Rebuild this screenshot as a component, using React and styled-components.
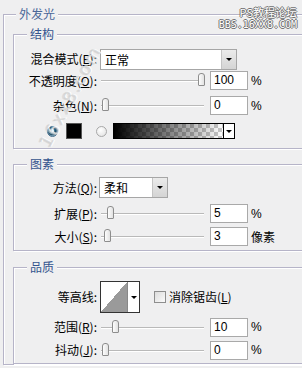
import React from 'react';
import styled, { createGlobalStyle } from 'styled-components';

const Global = createGlobalStyle`
  html, body { margin: 0; padding: 0; }
  body { background: #efeff0; }
`;

const BG = '#efeff0';

const Panel = styled.div`
  position: relative;
  width: 302px;
  height: 368px;
  overflow: hidden;
  box-sizing: border-box;
  padding: 7px 0 0 3px;
  background: ${BG};
  font-family: "Noto Sans CJK SC", "Noto Sans", sans-serif;
  font-size: 12px;
  color: #000;
`;

const Group = styled.fieldset`
  margin: ${(p) => (p.$outer ? '0' : `${p.$mt}px 0 0 9px`)};
  padding: 0;
  width: 340px;
  min-width: 0;
  box-sizing: border-box;
  border: 1px solid #b6b4c8;
  box-shadow: inset 1px 1px 0 #fff, 1px 1px 0 #fff;
`;

const Legend = styled.legend`
  margin-left: ${(p) => p.$ml}px;
  padding: 0 3px;
  height: 14px;
  line-height: 14px;
  font-size: 12px;
  color: ${(p) => p.$color || '#34548e'};
  background: ${BG};
`;

const Body = styled.div`
  display: flex;
  flex-direction: column;
  padding-bottom: ${(p) => p.$pb || 0}px;
`;

const Row = styled.div`
  display: flex;
  align-items: center;
  height: ${(p) => p.$h}px;
  margin-top: ${(p) => p.$mt || 0}px;
`;

const Label = styled.label`
  flex: none;
  width: 86px;
  padding-right: 3px;
  box-sizing: border-box;
  text-align: right;
  white-space: nowrap;
  line-height: 14px;
  u { text-decoration: underline; text-underline-offset: 1px; }
`;

const Select = styled.div`
  flex: none;
  display: flex;
  align-items: stretch;
  width: ${(p) => p.$w}px;
  height: 21px;
  margin-left: ${(p) => p.$ml || 0}px;
  box-sizing: border-box;
  border: 1px solid #a6a6a6;
  background: #fff;
`;

const SelectText = styled.span`
  flex: 1;
  padding-left: 4px;
  line-height: 19px;
`;

const DropBtn = styled.span`
  flex: none;
  width: 14px;
  display: flex;
  align-items: center;
  justify-content: center;
  background: linear-gradient(#ebebeb, #d4d4d4);
  border-left: 1px solid #c4c4c4;
`;

const Tri = styled.span`
  width: 0;
  height: 0;
  border-left: 3px solid transparent;
  border-right: 3px solid transparent;
  border-top: 3px solid #000;
`;

const SliderBox = styled.div`
  position: relative;
  flex: none;
  width: 105px;
  height: 17px;
  &::before {
    content: '';
    position: absolute;
    left: 1px;
    right: 1px;
    top: 8px;
    height: 1px;
    background: #b9b9b9;
    box-shadow: 0 1px 0 #fff;
  }
`;

const Thumb = styled.span`
  position: absolute;
  top: 1px;
  width: 7px;
  height: 13px;
  box-sizing: border-box;
  border: 1px solid #8d8d8d;
  border-radius: 3px 3px 1px 1px;
  background: linear-gradient(90deg, #fdfdfd, #e2e2e2);
`;

const Slider = ({ v }) => (
  <SliderBox>
    <Thumb style={{ left: `${2 + (v / 100) * 96}px` }} />
  </SliderBox>
);

const NumBox = styled.div`
  flex: none;
  width: 38px;
  height: 19px;
  margin-left: 5px;
  box-sizing: border-box;
  border: 1px solid #a9a9a9;
  background: #fff;
  padding-left: 3px;
  font-family: "Liberation Sans", Arial, sans-serif;
  font-size: 12px;
  line-height: 17px;
`;

const Unit = styled.span`
  margin-left: 3px;
  font-family: ${(p) => (p.$cjk ? '"Noto Sans CJK SC", sans-serif' : '"Liberation Sans", Arial, sans-serif')};
  font-size: 12px;
  line-height: 14px;
`;

const SwatchRow = styled.div`
  display: flex;
  align-items: center;
  height: 18px;
  margin-top: 6px;
  padding-left: 33px;
`;

const Radio = styled.span`
  flex: none;
  width: 11px;
  height: 11px;
  margin-left: ${(p) => p.$ml || 0}px;
  border-radius: 50%;
  box-sizing: border-box;
  border: 1px solid ${(p) => (p.$on ? '#47708f' : '#a8a8a8')};
  background: ${(p) =>
    p.$on
      ? 'radial-gradient(circle at 45% 40%, #bfe3f3 0 1.5px, #2d6f90 2.5px, #123d55 4px, #6f98ae 5px)'
      : 'radial-gradient(circle at 40% 35%, #ffffff, #dedede)'};
`;

const ColorSwatch = styled.span`
  flex: none;
  width: 16px;
  height: 16px;
  margin-left: 8px;
  box-sizing: border-box;
  border: 1px solid #555;
  background: #000;
`;

const GradBar = styled.div`
  flex: none;
  display: flex;
  width: 122px;
  height: 16px;
  margin-left: 6px;
  box-sizing: border-box;
  border: 1px solid #000;
  background: #fff;
`;

const GradFill = styled.span`
  flex: 1;
  background-image: linear-gradient(90deg, #000 0%, rgba(0, 0, 0, 0.55) 45%, rgba(0, 0, 0, 0) 100%),
    conic-gradient(#c8c8c8 25%, #fff 0 50%, #c8c8c8 0 75%, #fff 0);
  background-size: 100% 100%, 8px 8px;
`;

const GradDrop = styled.span`
  flex: none;
  width: 10px;
  display: flex;
  align-items: center;
  justify-content: center;
  border-left: 1px solid #000;
  background: #fff;
`;

const Contour = styled.div`
  flex: none;
  display: flex;
  width: 40px;
  height: 32px;
  box-sizing: border-box;
  border: 1px solid #333;
  background: #fff;
`;

const ContourGraph = styled.span`
  flex: 1;
  background: linear-gradient(to top left, #9a9a9a 50%, #fff 50%);
  border-right: 1px solid #888;
`;

const ContourDrop = styled.span`
  flex: none;
  width: 11px;
  display: flex;
  align-items: center;
  justify-content: center;
`;

const Check = styled.span`
  flex: none;
  width: 12px;
  height: 12px;
  margin-left: 14px;
  box-sizing: border-box;
  border: 1px solid #8e8e8e;
  background: linear-gradient(135deg, #dcdcdc, #fbfbfb);
`;

const CheckLabel = styled.span`
  margin-left: 3px;
  line-height: 14px;
  u { text-underline-offset: 1px; }
`;

const Stamp = styled.div`
  position: absolute;
  top: 7px;
  right: 5px;
  display: flex;
  flex-direction: column;
  align-items: flex-end;
  font-family: "Noto Sans CJK SC", sans-serif;
  font-size: 11px;
  line-height: 11px;
  color: #fff;
  text-shadow: 1px 0 0 #707070, -1px 0 0 #707070, 0 1px 0 #707070, 0 -1px 0 #707070;
  span + span {
    font-family: "DejaVu Sans Mono", monospace;
    font-size: 10px;
    margin-top: 1px;
  }
`;

const Mark = styled.div`
  position: absolute;
  left: 44px;
  top: 136px;
  height: 20px;
  line-height: 20px;
  transform: rotate(-62deg);
  transform-origin: 0 10px;
  font-family: "DejaVu Sans", sans-serif;
  font-size: 17px;
  letter-spacing: 2px;
  white-space: nowrap;
  color: rgba(200, 200, 200, 0.6);
  text-shadow: 1px 1px 0 rgba(255, 255, 255, 0.8), -1px -1px 0 rgba(160, 160, 160, 0.25);
  pointer-events: none;
`;

export default function App() {
  return (
    <Panel>
      <Global />
      <Group $outer>
        <Legend $ml={12} $color="#4a6698">外发光</Legend>
        <Group $mt={6}>
          <Legend $ml={13}>结构</Legend>
          <Body $pb={8}>
            <Row $h={22} $mt={7}>
              <Label>混合模式(<u>E</u>):</Label>
              <Select $w={137}>
                <SelectText>正常</SelectText>
                <DropBtn><Tri /></DropBtn>
              </Select>
            </Row>
            <Row $h={21}>
              <Label>不透明度(<u>O</u>):</Label>
              <Slider v={100} />
              <NumBox>100</NumBox>
              <Unit>%</Unit>
            </Row>
            <Row $h={21} $mt={4}>
              <Label>杂色(<u>N</u>):</Label>
              <Slider v={0} />
              <NumBox>0</NumBox>
              <Unit>%</Unit>
            </Row>
            <SwatchRow>
              <Radio $on />
              <ColorSwatch />
              <Radio $ml={14} />
              <GradBar>
                <GradFill />
                <GradDrop><Tri /></GradDrop>
              </GradBar>
            </SwatchRow>
          </Body>
        </Group>
        <Group $mt={8}>
          <Legend $ml={13}>图素</Legend>
          <Body $pb={3}>
            <Row $h={21} $mt={6}>
              <Label>方法(<u>Q</u>):</Label>
              <Select $w={69} $ml={-1}>
                <SelectText>柔和</SelectText>
                <DropBtn><Tri /></DropBtn>
              </Select>
            </Row>
            <Row $h={21} $mt={5}>
              <Label>扩展(<u>P</u>):</Label>
              <Slider v={5} />
              <NumBox>5</NumBox>
              <Unit>%</Unit>
            </Row>
            <Row $h={21} $mt={2}>
              <Label>大小(<u>S</u>):</Label>
              <Slider v={2} />
              <NumBox>3</NumBox>
              <Unit $cjk>像素</Unit>
            </Row>
          </Body>
        </Group>
        <Group $mt={9}>
          <Legend $ml={13}>品质</Legend>
          <Body $pb={3}>
            <Row $h={32} $mt={7}>
              <Label>等高线:</Label>
              <Contour>
                <ContourGraph />
                <ContourDrop><Tri /></ContourDrop>
              </Contour>
              <Check />
              <CheckLabel>消除锯齿(<u>L</u>)</CheckLabel>
            </Row>
            <Row $h={20} $mt={4}>
              <Label>范围(<u>R</u>):</Label>
              <Slider v={10} />
              <NumBox>10</NumBox>
              <Unit>%</Unit>
            </Row>
            <Row $h={20} $mt={3}>
              <Label>抖动(<u>J</u>):</Label>
              <Slider v={0} />
              <NumBox>0</NumBox>
              <Unit>%</Unit>
            </Row>
          </Body>
        </Group>
      </Group>
      <Stamp>
        <span>PS教程论坛</span>
        <span>BBS.16XX8.COM</span>
      </Stamp>
      <Mark>16xx8.com</Mark>
    </Panel>
  );
}
